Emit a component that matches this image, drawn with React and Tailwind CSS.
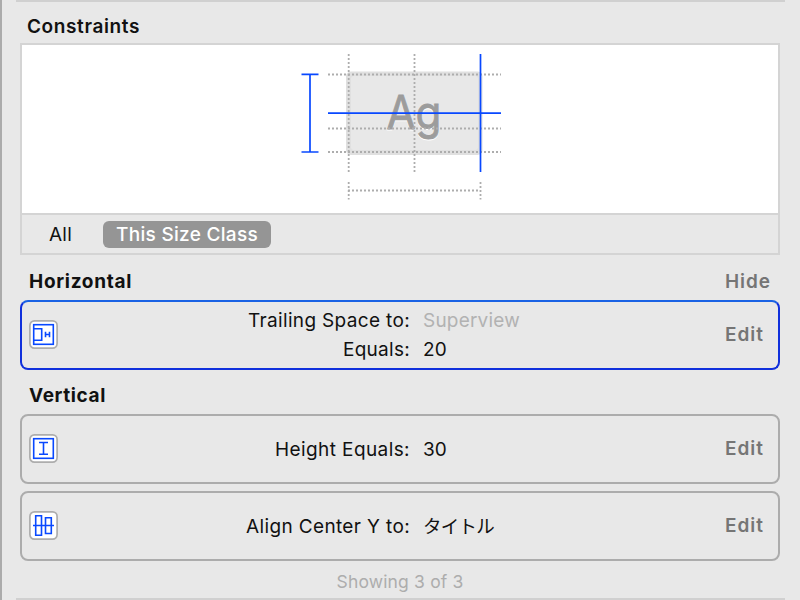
const BLUE = "#0848ff";

function Dotted({ x1, y1, x2, y2 }) {
  return <line x1={x1} y1={y1} x2={x2} y2={y2} stroke="#adadad" strokeWidth="1.800" strokeDasharray="2 2" />;
}

function Diagram() {
  return (
    <svg width="756" height="168" viewBox="22 45 756 168" className="block" fontFamily="Inter, sans-serif">
      <rect x="346" y="71.5" width="136.500" height="83.500" rx="5" fill="#e0e0e0" />
      <rect x="351" y="76" width="127" height="74" rx="3" fill="#e8e8e8" />
      <text x="386.500" y="130" fontSize="46" fill="#fff" stroke="#fff" textLength="55" lengthAdjust="spacingAndGlyphs">Ag</text>
      <text x="386.500" y="129" fontSize="46" fill="#9c9c9c" stroke="#9c9c9c" strokeWidth="0.900" textLength="55" lengthAdjust="spacingAndGlyphs">Ag</text>
      <Dotted x1={328} y1={74.500} x2={501} y2={74.500} />
      <Dotted x1={328} y1={128.500} x2={501} y2={128.500} />
      <Dotted x1={328} y1={152} x2={501} y2={152} />
      <Dotted x1={348.700} y1={54} x2={348.700} y2={172} />
      <Dotted x1={414.500} y1={54} x2={414.500} y2={172} />
      <Dotted x1={348} y1={190.500} x2={480} y2={190.500} />
      <Dotted x1={348.700} y1={182} x2={348.700} y2={199.500} />
      <Dotted x1={480.500} y1={182} x2={480.500} y2={199.500} />
      <g stroke={BLUE} strokeWidth="1.700" fill="none">
        <path d="M480.500 54V172M328 113.200H501" />
        <path d="M301.500 74.300H318.500M301.500 152H318.500M310 74.500V152" />
      </g>
    </svg>
  );
}

function Icon({ kind }) {
  return (
    <svg width="29" height="29" viewBox="0 0 29 29" className="mb-[2px] block shrink-0" fill="none">
      <rect x="0.900" y="0.900" width="27.200" height="27.200" rx="4.500" fill="#fff" stroke="#adadad" strokeWidth="1.700" />
      <g stroke={BLUE} strokeWidth="1.600">
        {kind !== "center" && <rect x="4.700" y="4.700" width="19.600" height="19.600" />}
        {kind === "trailing" && <path d="M5 8.700H12.700V20.300H5M16.500 11.700V17.300M20.500 11.700V17.300M16.500 14.500H20.500" />}
        {kind === "height" && <path d="M10 8.500H19M10 20.300H19M14.500 8.500V20.300" />}
        {kind === "center" && <path d="M6.700 4.700H12.500V24.300H6.700ZM16.500 6.700H22.300V22.500H16.500ZM4 14.500H25" />}
      </g>
    </svg>
  );
}

function Line({ label, value, muted, labelWidth, valueWidth, small }) {
  return (
    <div className="flex h-[29px] items-center">
      <div className="flex w-[352px] justify-end">
        <Text width={labelWidth}>{label}</Text>
      </div>
      <div className={muted ? "ml-[13px] text-[#b2b2b2]" : small ? "-mt-[2px] ml-[13px] text-[18.500px]" : "ml-[13px]"}>
        <Text width={valueWidth}>{value}</Text>
      </div>
    </div>
  );
}

function Text({ width, children }) {
  const ref = (el) => {
    if (!el) return;
    el.style.letterSpacing = "0px";
    const natural = el.getBoundingClientRect().width;
    el.style.letterSpacing = (width - natural) / children.length + "px";
  };
  return <span ref={ref} className="inline-block whitespace-nowrap">{children}</span>;
}

function Card({ kind, selected, children }) {
  return (
    <div className={"flex h-[70px] items-center rounded-[8px] border-2 pr-[14px] pl-[7px] " + (selected ? "border-[#1030dc] border-t-[#1a62e4]" : "border-[#acacac]")}>
      <Icon kind={kind} />
      <div className="flex-1">{children}</div>
      <span className="font-semibold text-[#757575]"><Text width={39}>Edit</Text></span>
    </div>
  );
}

export default function App() {
  return (
    <div className="flex h-[600px] w-[800px] flex-col overflow-hidden border-l-2 border-[#ababab] bg-[#e8e8e8] font-[Inter,'Noto_Sans_CJK_JP',sans-serif] text-[19px] leading-[24px] text-[#111]">
      <div className="ml-[14px] h-[2px] w-[769px] shrink-0 bg-[#d0d0d0]" />
      <div className="mt-[13px] ml-[25px] h-[28px] font-semibold"><Text width={113}>Constraints</Text></div>
      <div className="ml-[18px] h-[212px] w-[760px] shrink-0 border-2 border-[#d4d4d4]">
        <div className="h-[168px] bg-white"><Diagram /></div>
        <div className="flex h-[40px] items-center border-t-2 border-[#d4d4d4] pl-[27px]">
          <div className="pt-[2px]"><Text width={23}>All</Text></div>
          <div className="ml-[31px] flex h-[27px] w-[168px] items-center justify-center rounded-[6px] bg-[#959595] pt-[2px] font-medium text-white">
            <Text width={142}>This Size Class</Text>
          </div>
        </div>
      </div>
      <div className="ml-[27px] flex h-[45px] w-[742px] shrink-0 items-center justify-between pt-[9px] font-bold">
        <Text width={103}>Horizontal</Text>
        <span className="font-semibold text-[#757575]"><Text width={46}>Hide</Text></span>
      </div>
      <div className="ml-[18px] w-[760px] shrink-0">
        <Card kind="trailing" selected>
          <Line label="Trailing Space to:" labelWidth={162} value="Superview" valueWidth={97} muted />
          <Line label="Equals:" labelWidth={67} value="20" valueWidth={24} />
        </Card>
        <div className="flex h-[44px] items-center pt-[8px] pl-[9px] font-bold"><Text width={77}>Vertical</Text></div>
        <Card kind="height">
          <div className="pt-[2px]">
            <Line label="Height Equals:" labelWidth={135} value="30" valueWidth={24} />
          </div>
        </Card>
        <div className="h-[7px]" />
        <Card kind="center">
          <div className="pt-[2px]">
            <Line label="Align Center Y to:" labelWidth={164} value="タイトル" valueWidth={71} small />
          </div>
        </Card>
      </div>
      <div className="-ml-[2px] flex h-[37px] shrink-0 items-center justify-center pt-[5px] text-[17.500px] text-[#adadad]">
        <Text width={127}>Showing 3 of 3</Text>
      </div>
      <div className="ml-[14px] h-[2px] w-[769px] shrink-0 bg-[#d0d0d0]" />
    </div>
  );
}
